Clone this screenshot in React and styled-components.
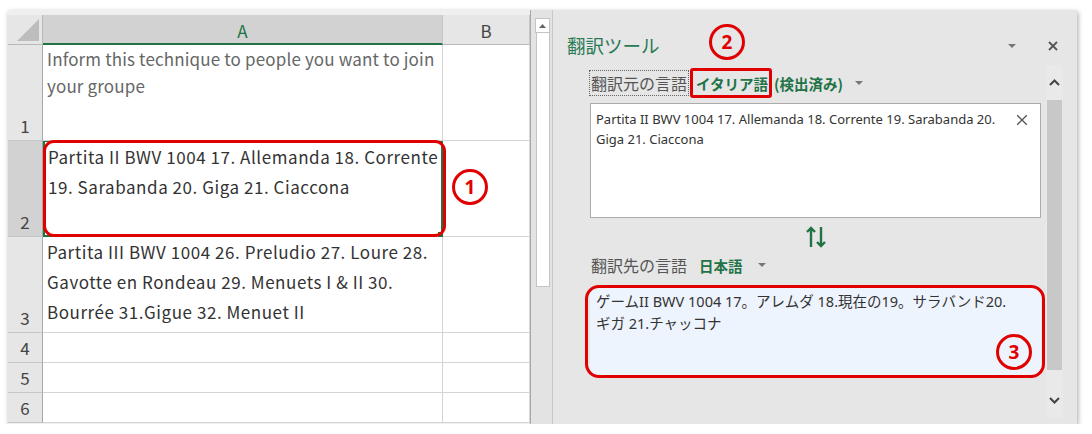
import React from "react";
import styled, { createGlobalStyle } from "styled-components";

const Global = createGlobalStyle`
  html, body { margin: 0; padding: 0; background: #ffffff; }
  body { font-family: "Noto Sans", "Noto Sans CJK JP", sans-serif; }
  * { box-sizing: border-box; }
`;

const GREEN = "#217346";
const RED = "#e00000";

const Window = styled.div`
  margin: 10px 0 0 8px;
  width: 1069px;
  height: 414px;
  display: flex;
  box-shadow: 1px 2px 5px rgba(0, 0, 0, 0.35);
  background: #e6e6e6;
  overflow: hidden;
`;

const Sheet = styled.div`
  width: 522px;
  padding-top: 5px;
  background: #efefef;
  display: grid;
  grid-template-columns: 35px 400px 87px;
  grid-template-rows: 30px 96px 96px 96px 30px 30px 30px;
  font-family: "Noto Sans CJK JP", "Noto Sans", sans-serif;
`;

const Corner = styled.div`
  background: #e6e6e6;
  border-right: 1px solid #b8b8b8;
  border-bottom: 1px solid #b8b8b8;
  position: relative;
  &::after {
    content: "";
    position: absolute;
    right: 3px;
    bottom: 3px;
    border-style: solid;
    border-width: 0 0 22px 22px;
    border-color: transparent transparent #bdbdbd transparent;
  }
`;

const ColHead = styled.div`
  background: ${(p) => (p.$active ? "#d2d2d2" : "#e6e6e6")};
  color: ${(p) => (p.$active ? GREEN : "#444")};
  border-right: 1px solid #c6c6c6;
  border-bottom: ${(p) => (p.$active ? `2px solid ${GREEN}` : "1px solid #b8b8b8")};
  display: flex;
  align-items: center;
  justify-content: center;
  font-size: 17px;
  padding-top: 2px;
`;

const RowHead = styled.div`
  background: ${(p) => (p.$active ? "#d2d2d2" : "#e6e6e6")};
  color: #444;
  border-right: 1px solid #a8a8a8;
  border-bottom: 1px solid #c6c6c6;
  display: flex;
  align-items: flex-end;
  justify-content: center;
  font-size: 17px;
  line-height: 28px;
`;

const Cell = styled.div`
  position: relative;
  background: #ffffff;
  border-right: 1px solid #d4d4d4;
  border-bottom: 1px solid #d4d4d4;
  padding: 0 0 0 4px;
  font-size: 17px;
  line-height: ${(p) => (p.$muted ? 27 : 30)}px;
  color: ${(p) => (p.$muted ? "#666" : "#333")};
  letter-spacing: ${(p) => (p.$muted ? 0.15 : 0.55)}px;
`;

const SelectedCell = styled(Cell)`
  border: 2px solid ${GREEN};
  border-top: 1px solid ${GREEN};
  padding-left: 3px;
  &::after {
    content: "";
    position: absolute;
    right: -4px;
    bottom: -4px;
    width: 6px;
    height: 6px;
    background: ${GREEN};
    border: 1px solid #fff;
  }
`;

const RedBox = styled.div`
  position: absolute;
  top: ${(p) => p.$t}px;
  left: ${(p) => p.$l}px;
  right: ${(p) => p.$r}px;
  bottom: ${(p) => p.$b}px;
  border: 3px solid ${RED};
  border-radius: ${(p) => p.$rad}px;
  pointer-events: none;
  z-index: 2;
`;

const Badge = styled.div`
  position: absolute;
  top: ${(p) => p.$t}px;
  left: ${(p) => p.$l}px;
  width: 36px;
  height: 36px;
  border: 3px solid ${RED};
  border-radius: 50%;
  color: ${RED};
  font-family: "Noto Sans", sans-serif;
  font-weight: 700;
  font-size: 19px;
  letter-spacing: 0;
  display: flex;
  align-items: center;
  justify-content: center;
  z-index: 3;
`;

const SheetScroll = styled.div`
  width: 23px;
  padding-top: 8px;
  background: #e3e3e3;
  border-left: 1px solid #a9a9a9;
  border-right: 1px solid #c8c8c8;
  display: flex;
  flex-direction: column;
  align-items: center;
`;

const ScrollBtn = styled.div`
  width: 15px;
  height: 15px;
  background: #fff;
  border: 1px solid #c4c4c4;
  display: flex;
  align-items: center;
  justify-content: center;
  margin-left: 2px;
`;

const ScrollThumb = styled.div`
  width: 14px;
  height: 254px;
  background: #fff;
  border: 1px solid #c4c4c4;
  border-top: none;
  margin-left: 2px;
`;

const Pane = styled.div`
  position: relative;
  width: 524px;
  background: #e6e6e6;
  display: flex;
  flex-direction: column;
  font-family: "Noto Sans", "Noto Sans CJK JP", sans-serif;
`;

const PaneHeader = styled.div`
  height: 55px;
  display: flex;
  align-items: flex-start;
  padding: 0 0 0 14px;
`;

const Title = styled.div`
  margin-top: 22px;
  font-family: "Noto Sans CJK JP", sans-serif;
  font-size: 18.5px;
  line-height: 26px;
  color: #2a7a53;
`;

const HeaderIcons = styled.div`
  margin-left: auto;
  margin-top: 31px;
  display: flex;
  align-items: center;
  gap: 32px;
  padding-right: 19px;
`;

const PaneBody = styled.div`
  display: flex;
  height: 353px;
`;

const Content = styled.div`
  width: 493px;
  padding: 5px 5px 0 37px;
  display: flex;
  flex-direction: column;
`;

const LangRow = styled.div`
  height: 26px;
  display: flex;
  align-items: center;
  font-family: "Noto Sans CJK JP", sans-serif;
  font-size: 16px;
`;

const LangLabel = styled.span`
  color: #555;
  height: 26px;
  line-height: 24px;
  padding: 0 1px;
  border: 1px dotted ${(p) => (p.$focus ? "#666" : "transparent")};
  margin-left: -1px;
`;

const LangValue = styled.span`
  position: relative;
  color: ${GREEN};
  font-weight: 700;
  font-size: 14.5px;
  margin-left: ${(p) => p.$ml || 0}px;
`;

const Caret = styled.span`
  display: inline-block;
  width: 0;
  height: 0;
  border-left: 4px solid transparent;
  border-right: 4px solid transparent;
  border-top: 4px solid #777;
  margin-left: ${(p) => p.$ml || 0}px;
`;

const SourceBox = styled.div`
  position: relative;
  margin-top: 7px;
  height: 115px;
  background: #fff;
  border: 1px solid #ababab;
  padding: 5px 40px 0 5px;
  font-size: 13px;
  line-height: 20px;
  color: #333;
`;

const ClearBtn = styled.div`
  position: absolute;
  right: 12px;
  top: 7px;
`;

const SwapRow = styled.div`
  height: 34px;
  display: flex;
  justify-content: center;
  align-items: center;
  padding-top: 3px;
`;

const TargetBox = styled.div`
  position: relative;
  margin-top: 10px;
  height: 88px;
  background: #eef4fd;
  padding: 2px 12px 0 6px;
  font-family: "Noto Sans", "Noto Sans CJK JP", sans-serif;
  font-size: 14.5px;
  line-height: 22px;
  color: #333;
  word-break: keep-all;
`;

const PaneScroll = styled.div`
  width: 17px;
  background: #e9e9e9;
  display: flex;
  flex-direction: column;
  align-items: center;
`;

const ChevronBox = styled.div`
  height: 35px;
  display: flex;
  align-items: center;
  justify-content: center;
  margin-top: ${(p) => (p.$bottom ? "auto" : "0")};
`;

const PaneThumb = styled.div`
  width: 15px;
  height: 270px;
  background: #c8c8c8;
`;

const Chevron = ({ up }) => (
  <svg width="11" height="7" viewBox="0 0 11 7">
    <path
      d={up ? "M1 6 L5.5 1.5 L10 6" : "M1 1 L5.5 5.5 L10 1"}
      fill="none"
      stroke="#444"
      strokeWidth="2"
    />
  </svg>
);

const XIcon = ({ size, color, w }) => (
  <svg width={size} height={size} viewBox="0 0 10 10">
    <path d="M1 1 L9 9 M9 1 L1 9" stroke={color} strokeWidth={w} fill="none" />
  </svg>
);

const SwapIcon = () => (
  <svg width="20" height="22" viewBox="0 0 20 22">
    <path d="M5 21 V2 M1 6 L5 2 L9 6" stroke={GREEN} strokeWidth="2.4" fill="none" />
    <path d="M15 1 V20 M11 16 L15 20 L19 16" stroke={GREEN} strokeWidth="2.4" fill="none" />
  </svg>
);

export default function App() {
  return (
    <>
      <Global />
      <Window>
        <Sheet>
          <Corner />
          <ColHead $active>A</ColHead>
          <ColHead>B</ColHead>

          <RowHead>1</RowHead>
          <Cell $muted>Inform this technique to people you want to join your groupe</Cell>
          <Cell />

          <RowHead $active>2</RowHead>
          <SelectedCell>
            Partita II BWV 1004 17. Allemanda 18. Corrente 19. Sarabanda 20. Giga 21. Ciaccona
            <RedBox $t={-2} $l={-2} $r={-5} $b={-2} $rad={11} />
          </SelectedCell>
          <Cell>
            <Badge $t={28} $l={9}>1</Badge>
          </Cell>

          <RowHead>3</RowHead>
          <Cell>
            Partita III BWV 1004 26. Preludio 27. Loure 28. Gavotte en Rondeau 29. Menuets I &amp; II 30.
            Bourrée 31.Gigue 32. Menuet II
          </Cell>
          <Cell />

          <RowHead>4</RowHead>
          <Cell />
          <Cell />
          <RowHead>5</RowHead>
          <Cell />
          <Cell />
          <RowHead>6</RowHead>
          <Cell />
          <Cell />
        </Sheet>

        <SheetScroll>
          <ScrollBtn>
            <svg width="7" height="4" viewBox="0 0 7 4">
              <path d="M0 4 L3.5 0 L7 4 Z" fill="#666" />
            </svg>
          </ScrollBtn>
          <ScrollThumb />
        </SheetScroll>

        <Pane>
          <Badge $t={14} $l={156}>2</Badge>
          <PaneHeader>
            <Title>翻訳ツール</Title>
            <HeaderIcons>
              <Caret />
              <XIcon size={10} color="#555" w={1.8} />
            </HeaderIcons>
          </PaneHeader>
          <PaneBody>
            <Content>
              <LangRow>
                <LangLabel $focus>翻訳元の言語</LangLabel>
                <LangValue $ml={7}>
                  イタリア語
                  <RedBox $t={-5} $l={-6} $r={-4} $b={-4} $rad={3} />
                </LangValue>
                <LangValue $ml={6}>(検出済み)</LangValue>
                <Caret $ml={12} />
              </LangRow>
              <SourceBox>
                Partita II BWV 1004 17. Allemanda 18. Corrente 19. Sarabanda 20. Giga 21. Ciaccona
                <ClearBtn>
                  <XIcon size={12} color="#555" w={1.1} />
                </ClearBtn>
              </SourceBox>
              <SwapRow>
                <SwapIcon />
              </SwapRow>
              <LangRow>
                <LangLabel>翻訳先の言語</LangLabel>
                <LangValue $ml={10}>日本語</LangValue>
                <Caret $ml={15} />
              </LangRow>
              <TargetBox>
                ゲームII BWV 1004 17。アレムダ 18.現在の19。サラバンド20. ギガ 21.チャッコナ
                <RedBox $t={-3} $l={-5} $r={-4} $b={-2} $rad={14} />
                <Badge $t={46} $l={406}>3</Badge>
              </TargetBox>
            </Content>
            <PaneScroll>
              <ChevronBox>
                <Chevron up />
              </ChevronBox>
              <PaneThumb />
              <ChevronBox $bottom>
                <Chevron />
              </ChevronBox>
            </PaneScroll>
          </PaneBody>
        </Pane>
      </Window>
    </>
  );
}
